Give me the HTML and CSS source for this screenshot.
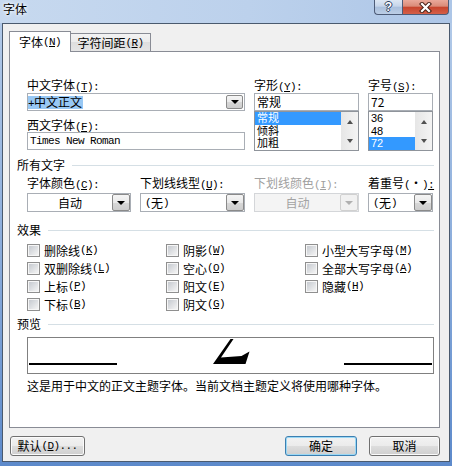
FILE: index.html
```html
<!DOCTYPE html>
<html lang="zh-CN">
<head>
<meta charset="utf-8">
<title>字体</title>
<link rel="stylesheet" href="styles.css">
</head>
<body>
<div class="window">
  <div class="titlebar">
    <div class="title">字体</div>
    <div class="caption-btns">
      <div class="cap help">?</div>
      <div class="cap close">
        <svg width="13" height="11" viewBox="0 0 13 11"><path d="M3 2 L10 9 M10 2 L3 9" stroke="#4a2219" stroke-width="4.2" stroke-linecap="square" fill="none"/><path d="M3 2 L10 9 M10 2 L3 9" stroke="#ffffff" stroke-width="2.2" stroke-linecap="square" fill="none"/></svg>
      </div>
    </div>
  </div>
  <div class="client">
    <div class="tabs">
      <div class="tab active">字体<span class="ak">(<u>N</u>)</span></div>
      <div class="tab">字符间距<span class="ak">(<u>R</u>)</span></div>
    </div>
    <div class="panel">
      <div class="fields font-grid">
        <div class="col">
          <div class="lbl">中文字体<span class="ak">(<u>T</u>):</span></div>
          <div class="combo edit"><span class="val"><span class="sel"><span class="ak">+</span>中文正文</span></span><span class="dd inset"><i class="arr"></i></span></div>
          <div class="lbl second">西文字体<span class="ak">(<u>F</u>):</span></div>
          <div class="textbox mono">Times New Roman</div>
        </div>
        <div class="col">
          <div class="lbl">字形<span class="ak">(<u>Y</u>):</span></div>
          <div class="textbox">常规</div>
          <div class="listbox">
            <div class="items">
              <div class="item on">常规</div>
              <div class="item">倾斜</div>
              <div class="item">加粗</div>
            </div>
            <div class="vscroll"><span class="sb"><i class="arr-up"></i></span><span class="sb"><i class="arr-dn"></i></span></div>
          </div>
        </div>
        <div class="col">
          <div class="lbl">字号<span class="ak">(<u>S</u>):</span></div>
          <div class="textbox">72</div>
          <div class="listbox">
            <div class="items">
              <div class="item">36</div>
              <div class="item">48</div>
              <div class="item on">72</div>
            </div>
            <div class="vscroll"><span class="sb"><i class="arr-up"></i></span><span class="sb"><i class="arr-dn"></i></span></div>
          </div>
        </div>
      </div>

      <div class="group first"><span>所有文字</span><span class="rule"></span></div>
      <div class="fields combo-grid">
        <div class="col">
          <div class="lbl">字体颜色<span class="ak">(<u>C</u>):</span></div>
          <div class="combo"><span class="val center">自动</span><span class="dd"><i class="arr"></i></span></div>
        </div>
        <div class="col">
          <div class="lbl">下划线线型<span class="ak">(<u>U</u>):</span></div>
          <div class="combo"><span class="val"><span class="ak">(</span>无<span class="ak">)</span></span><span class="dd"><i class="arr"></i></span></div>
        </div>
        <div class="col">
          <div class="lbl dis">下划线颜色<span class="ak">(<u>I</u>):</span></div>
          <div class="combo disabled"><span class="val center">自动</span><span class="dd"><i class="arr"></i></span></div>
        </div>
        <div class="col">
          <div class="lbl">着重号<span class="ak">(</span>・<span class="ak">)<u>:</u></span></div>
          <div class="combo"><span class="val"><span class="ak">(</span>无<span class="ak">)</span></span><span class="dd"><i class="arr"></i></span></div>
        </div>
      </div>

      <div class="group fx"><span>效果</span><span class="rule"></span></div>
      <div class="fields checks">
        <div class="cb"><span class="box"></span>删除线<span class="ak">(<u>K</u>)</span></div>
        <div class="cb"><span class="box"></span>阴影<span class="ak">(<u>W</u>)</span></div>
        <div class="cb"><span class="box"></span>小型大写字母<span class="ak">(<u>M</u>)</span></div>
        <div class="cb"><span class="box"></span>双删除线<span class="ak">(<u>L</u>)</span></div>
        <div class="cb"><span class="box"></span>空心<span class="ak">(<u>O</u>)</span></div>
        <div class="cb"><span class="box"></span>全部大写字母<span class="ak">(<u>A</u>)</span></div>
        <div class="cb"><span class="box"></span>上标<span class="ak">(<u>P</u>)</span></div>
        <div class="cb"><span class="box"></span>阳文<span class="ak">(<u>E</u>)</span></div>
        <div class="cb"><span class="box"></span>隐藏<span class="ak">(<u>H</u>)</span></div>
        <div class="cb"><span class="box"></span>下标<span class="ak">(<u>B</u>)</span></div>
        <div class="cb"><span class="box"></span>阴文<span class="ak">(<u>G</u>)</span></div>
      </div>

      <div class="group pvh"><span>预览</span><span class="rule"></span></div>
      <div class="fields">
        <div class="preview">
          <svg class="pv" width="405" height="35" viewBox="0 0 405 35">
            <rect x="1" y="25" width="88" height="2" fill="#000"/>
            <rect x="316" y="25" width="88" height="2" fill="#000"/>
            <polygon points="202.5,1 205.5,1 193,19.5 213.5,18 221.5,13.5 217.5,26 185,26" fill="#000"/>
          </svg>
        </div>
        <div class="lbl desc">这是用于中文的正文主题字体。当前文档主题定义将使用哪种字体。</div>
      </div>
    </div>
    <div class="buttons">
      <div class="btn reset">默认<span class="ak">(<u>D</u>)...</span></div>
      <div class="spacer"></div>
      <div class="btn ok">确定</div>
      <div class="btn cancel">取消</div>
    </div>
  </div>
</div>
</body>
</html>
```

FILE: styles.css
```css
* { box-sizing: border-box; }
html, body { margin: 0; padding: 0; }
body {
  width: 452px;
  height: 466px;
  overflow: hidden;
  font-family: "Noto Sans CJK SC", "Noto Sans CJK JP", sans-serif;
  font-size: 12px;
  color: #000;
}
u { text-decoration: underline; text-underline-offset: 1px; }
.ak {
  font-family: "Liberation Mono", monospace;
  font-size: 11px;
  letter-spacing: -0.6px;
}

.window {
  width: 452px;
  height: 466px;
  display: flex;
  flex-direction: column;
  background: linear-gradient(to bottom, #c4d7ef 0px, #b1c9e8 23px, #8aacdb 55%, #5d8acb 100%);
}

.titlebar {
  height: 23px;
  display: flex;
  justify-content: space-between;
  align-items: flex-start;
  background: linear-gradient(to right, #c7d9ef, #bcd1ec 55%, #adc6e7);
}
.title {
  padding: 2px 0 0 3px;
  line-height: 14px;
  text-shadow: 0 0 5px #ffffff, 0 0 3px #ffffff;
}
.caption-btns { display: flex; margin-right: 3px; }
.cap {
  height: 15px;
  border: 1px solid #4d5c78;
  border-top: none;
  display: flex;
  align-items: center;
  justify-content: center;
}
.help {
  width: 28px;
  border-right: none;
  border-radius: 0 0 0 4px;
  background: linear-gradient(#dde7f3, #c6d5ea 45%, #a9bfdc 50%, #bccee6);
  font-family: "Liberation Sans", sans-serif;
  font-weight: bold;
  font-size: 12px;
  line-height: 12px;
  color: #fff;
  text-shadow: 1px 0 0 #2e3f5e, -1px 0 0 #2e3f5e, 0 1px 0 #2e3f5e, 0 -1px 0 #2e3f5e;
}
.close {
  width: 47px;
  border-radius: 0 0 4px 0;
  background: linear-gradient(#eaa99a, #da8b78 45%, #c7442c 50%, #d45f48);
}

.client {
  flex: 1;
  margin: 0 2px 4px 2px;
  border: 1px solid #4a5a6e;
  background: #f0f0f0;
  padding: 7px 9px 5px 6px;
  display: flex;
  flex-direction: column;
}

.tabs {
  display: flex;
  align-items: flex-end;
  height: 21px;
  margin-bottom: -1px;
  position: relative;
  z-index: 1;
}
.tab {
  width: 81px;
  height: 18px;
  margin: 0 0 1px -1px;
  border: 1px solid #898c95;
  border-bottom: none;
  background: linear-gradient(#f3f3f3, #ebebeb 50%, #dedede 50%, #e5e5e5);
  display: flex;
  align-items: center;
  justify-content: center;
  line-height: 14px;
  white-space: nowrap;
}
.tab.active {
  width: 62px;
  height: 21px;
  margin: 0;
  background: #fff;
}

.panel {
  height: 377px;
  border: 1px solid #898c95;
  background: #fff;
  padding: 26px 5px 0 7px;
}
.fields { padding-left: 10px; }
.lbl {
  height: 14px;
  line-height: 14px;
  white-space: nowrap;
}
.lbl.dis { color: #a0a0a0; }

.font-grid {
  display: grid;
  grid-template-columns: 218px 105px 65px;
  column-gap: 9px;
}
.font-grid .lbl { margin-bottom: 1px; }
.font-grid .lbl.second { margin: 7px 0 0 0; }

.textbox {
  height: 18px;
  border: 1px solid #a9aeb5;
  background: #fff;
  padding-left: 2px;
  line-height: 16px;
  white-space: nowrap;
}
.textbox.mono {
  font-family: "Liberation Mono", monospace;
  font-size: 11px;
  letter-spacing: -0.6px;
}

.combo {
  display: flex;
  height: 19px;
  border: 1px solid #a9aeb5;
  background: #fff;
}
.combo.edit { height: 18px; }
.combo .val {
  flex: 1;
  display: flex;
  align-items: center;
  padding-left: 4px;
  white-space: nowrap;
  overflow: hidden;
}
.combo.edit .val { padding-left: 0; }
.combo .val.center { justify-content: center; padding-left: 0; }
.sel {
  background: #98c8f4;
  line-height: 12px;
  height: 13px;
  padding-right: 1px;
}
.dd {
  width: 18px;
  border: 1px solid #8a8a8a;
  border-radius: 2px;
  background: linear-gradient(#f5f5f5, #e9e9e9 50%, #d8d8d8 50%, #cdcdcd);
  display: flex;
  align-items: center;
  justify-content: center;
}
.dd.inset { width: 17px; margin: 1px; }
.arr {
  width: 0;
  height: 0;
  border-left: 4px solid transparent;
  border-right: 4px solid transparent;
  border-top: 4px solid #000;
}
.combo.disabled { border-color: #d4d6d9; background: #f4f4f4; color: #a3a3a3; }
.combo.disabled .dd { border-color: #d0d0d0; background: #f1f1f1; }
.combo.disabled .arr { border-top-color: #b0b0b0; }

.listbox {
  display: flex;
  height: 40px;
  border: 1px solid #8f949b;
  background: #fff;
}
.items { flex: 1; }
.item {
  height: 12.5px;
  line-height: 12.5px;
  font-family: "Liberation Sans", "Noto Sans CJK SC", sans-serif;
  font-size: 11px;
  padding-left: 2px;
  white-space: nowrap;
}
.item.on { background: #3399ff; color: #fff; }
.vscroll {
  width: 17px;
  display: flex;
  flex-direction: column;
  background: linear-gradient(to right, #e6e6e6, #f4f4f4);
}
.sb { flex: 1; display: flex; align-items: center; justify-content: center; }
.arr-up, .arr-dn {
  width: 0;
  height: 0;
  border-left: 3.5px solid transparent;
  border-right: 3.5px solid transparent;
}
.arr-up { border-bottom: 4px solid #505050; }
.arr-dn { border-top: 4px solid #505050; }

.group {
  display: flex;
  align-items: center;
  height: 14px;
  line-height: 14px;
  white-space: nowrap;
}
.group .rule { flex: 1; height: 1px; background: #d5dfe5; margin-left: 7px; }
.group.first { margin-top: 7px; }
.group.fx { margin-top: 11px; }
.group.pvh { margin-top: 4px; }

.combo-grid {
  display: grid;
  grid-template-columns: 104px 105px 105px 65px;
  column-gap: 9px;
  margin-top: 4px;
}
.combo-grid .lbl { margin-bottom: 3px; }

.checks {
  display: grid;
  grid-template-columns: 139px 139px auto;
  margin-top: 4px;
}
.cb {
  display: flex;
  align-items: center;
  height: 18px;
  white-space: nowrap;
}
.box {
  width: 13px;
  height: 13px;
  margin-right: 4px;
  border: 1px solid #8f8f8f;
  padding: 1px;
  background: linear-gradient(135deg, #c6cad0, #f4f4f4) content-box, #f6f6f6;
}

.preview {
  height: 37px;
  margin-top: 6px;
  border: 1px solid #808080;
  background: #fff;
}
.pv { display: block; }
.lbl.desc { margin-top: 5px; }

.buttons {
  display: flex;
  height: 20px;
  margin-top: 8px;
}
.spacer { flex: 1; }
.btn {
  height: 20px;
  border: 1px solid #707070;
  border-radius: 3px;
  background: linear-gradient(#f2f2f2, #ebebeb 50%, #dddddd 50%, #cfcfcf);
  box-shadow: inset 0 0 0 1px #fbfbfb;
  display: flex;
  align-items: center;
  justify-content: center;
  white-space: nowrap;
  line-height: 14px;
}
.btn.reset { width: 75px; margin-left: 1px; }
.btn.ok {
  width: 72px;
  border-color: #3c7fb1;
  box-shadow: inset 0 0 0 1px #9ad8f5;
}
.btn.cancel { width: 71px; margin-left: 12px; }
```
